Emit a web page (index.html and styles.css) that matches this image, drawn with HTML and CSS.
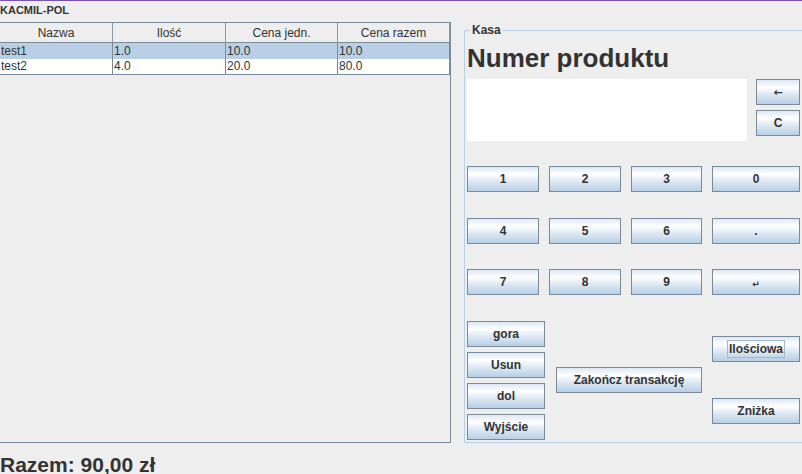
FILE: index.html
```html
<!DOCTYPE html>
<html lang="pl">
<head>
<meta charset="utf-8">
<title>KACMIL-POL</title>
<link rel="stylesheet" href="styles.css">
</head>
<body>
<div class="topline"></div>
<div class="apptitle">KACMIL-POL</div>
<div class="main">
  <div class="tablepane">
    <div class="grid thead">
      <div class="th">Nazwa</div>
      <div class="th">Ilość</div>
      <div class="th">Cena jedn.</div>
      <div class="th">Cena razem</div>
    </div>
    <div class="grid tr selected">
      <div class="td">test1</div>
      <div class="td">1.0</div>
      <div class="td">10.0</div>
      <div class="td">10.0</div>
    </div>
    <div class="grid tr">
      <div class="td">test2</div>
      <div class="td">4.0</div>
      <div class="td">20.0</div>
      <div class="td">80.0</div>
    </div>
  </div>
  <fieldset class="kasa">
    <legend>Kasa</legend>
    <div class="heading">Numer produktu</div>
    <div class="inputrow">
      <div class="display"></div>
      <div class="sidekeys">
        <button class="btn side arrow">←</button>
        <button class="btn side">C</button>
      </div>
    </div>
    <div class="keypad">
      <div class="keyrow">
        <button class="btn k1">1</button>
        <button class="btn k2">2</button>
        <button class="btn k3">3</button>
        <button class="btn k4">0</button>
      </div>
      <div class="keyrow second">
        <button class="btn k1">4</button>
        <button class="btn k2">5</button>
        <button class="btn k3">6</button>
        <button class="btn k4">.</button>
      </div>
      <div class="keyrow third">
        <button class="btn k1">7</button>
        <button class="btn k2">8</button>
        <button class="btn k3">9</button>
        <button class="btn k4 enter">↵</button>
      </div>
    </div>
    <div class="actions">
      <div class="col nav">
        <button class="btn navbtn">gora</button>
        <button class="btn navbtn">Usun</button>
        <button class="btn navbtn">dol</button>
        <button class="btn navbtn">Wyjście</button>
      </div>
      <div class="col mid">
        <button class="btn finish">Zakończ transakcję</button>
      </div>
      <div class="col right">
        <button class="btn rbtn"><span class="focus">Ilościowa</span></button>
        <button class="btn rbtn discount">Zniżka</button>
      </div>
    </div>
  </fieldset>
</div>
<div class="footer">Razem: 90,00 zł</div>
</body>
</html>
```
FILE: styles.css
```css
html, body {
  margin: 0;
  padding: 0;
}
body {
  width: 802px;
  height: 474px;
  overflow: hidden;
  background: #eeeeee;
  color: #333333;
  font-family: "Liberation Sans", Arial, sans-serif;
}
.topline {
  height: 1px;
  background: #7b52b0;
}
.apptitle {
  height: 21px;
  line-height: 19px;
  font-size: 11px;
  font-weight: bold;
  white-space: nowrap;
}
.main {
  display: flex;
  align-items: flex-start;
  height: 421px;
}
.tablepane {
  flex: none;
  box-sizing: border-box;
  width: 451px;
  height: 421px;
  border-top: 1px solid #7a8a99;
  border-right: 1px solid #7a8a99;
  border-bottom: 1px solid #7a8a99;
}
.grid {
  display: grid;
  grid-template-columns: 113px 113px 112px 112px;
}
.thead {
  height: 20px;
  box-sizing: border-box;
  border-bottom: 1px solid #7a8a99;
  background: #eeeeee;
}
.th {
  box-sizing: border-box;
  border-right: 1px solid #8d9aa8;
  text-align: center;
  font-size: 12px;
  line-height: 18px;
  padding-top: 1px;
  white-space: nowrap;
}
.tr {
  height: 16px;
  box-sizing: border-box;
  background: #ffffff;
}
.tr + .tr {
  border-bottom: 1px solid #7a8a99;
}
.tr.selected {
  background: #b8cfe5;
}
.td {
  box-sizing: border-box;
  border-right: 1px solid #7a8a99;
  padding-left: 1px;
  font-size: 12px;
  line-height: 16px;
  white-space: nowrap;
  overflow: hidden;
}
.tr + .tr .td {
  line-height: 15px;
}
.kasa {
  flex: none;
  box-sizing: border-box;
  width: 345px;
  margin: 2px 0 0 13px;
  padding: 0 0 2px 2px;
  border: 1px solid #b8cfe5;
  min-width: 0;
}
.kasa legend {
  margin-left: 3px;
  padding: 0 2px;
  font-size: 12px;
  font-weight: bold;
  line-height: 13px;
}
.heading {
  margin-top: 6px;
  height: 30px;
  line-height: 30px;
  font-size: 26px;
  font-weight: bold;
  white-space: nowrap;
}
.inputrow {
  display: flex;
  margin-top: 6px;
  height: 62px;
}
.display {
  width: 280px;
  height: 62px;
  background: #ffffff;
  margin-right: 9px;
}
.sidekeys {
  display: flex;
  flex-direction: column;
  gap: 5px;
}
.btn {
  box-sizing: border-box;
  height: 26px;
  margin: 0;
  padding: 0;
  border: 1px solid #7a8a99;
  border-radius: 0;
  background: linear-gradient(to bottom, #dde8f3 0%, #ffffff 30%, #dde8f3 60%, #b8cfe5 100%);
  color: #333333;
  font-family: "Liberation Sans", Arial, sans-serif;
  font-size: 12px;
  font-weight: bold;
  white-space: nowrap;
}
.side {
  width: 44px;
}
.arrow {
  font-family: "DejaVu Sans", sans-serif;
  font-size: 11px;
  font-weight: bold;
}
.keypad {
  margin-top: 25px;
}
.keyrow {
  display: flex;
  gap: 10px;
}
.keyrow.second {
  margin-top: 26px;
}
.keyrow.third {
  margin-top: 25px;
}
.k1, .k2 {
  width: 72px;
}
.k3 {
  width: 71px;
}
.k4 {
  width: 88px;
}
.enter {
  font-family: "DejaVu Sans", sans-serif;
  font-size: 9px;
  font-weight: bold;
  padding-top: 3px;
}
.actions {
  display: flex;
  margin-top: 26px;
  height: 119px;
}
.col {
  display: flex;
  flex-direction: column;
}
.nav {
  width: 78px;
  gap: 5px;
}
.navbtn {
  width: 78px;
}
.mid {
  margin-left: 11px;
  padding-top: 46px;
}
.finish {
  width: 146px;
}
.right {
  margin-left: 10px;
  padding-top: 15px;
  gap: 36px;
}
.rbtn {
  width: 88px;
}
.focus {
  display: inline-block;
  border: 1px solid #a3b8cc;
  padding: 0 1px;
  line-height: 16px;
}
.footer {
  height: 31px;
  box-sizing: border-box;
  padding-top: 9px;
  line-height: 25px;
  font-size: 21px;
  font-weight: bold;
  white-space: nowrap;
  overflow: hidden;
}
```
